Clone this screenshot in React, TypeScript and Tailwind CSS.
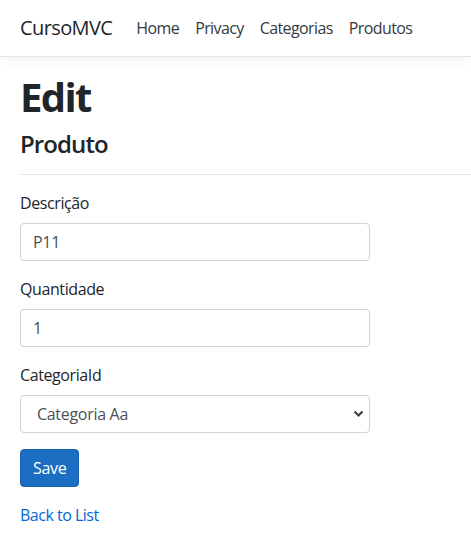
import { useState } from 'react'

const font = { fontFamily: '"Open Sans", "Noto Sans", Arial, sans-serif' }

function Navbar() {
  const links = ['Home', 'Privacy', 'Categorias', 'Produtos']
  return (
    <nav className="h-[57px] flex items-center px-5 bg-white border-b border-[#e5e5e5] shadow-[0_4px_12px_rgba(0,0,0,0.05)] mb-4">
      <a className="text-[20px] leading-[30px] text-[#212529] tracking-[-0.6px] mr-4">CursoMVC</a>
      <ul className="flex">
        {links.map((l) => (
          <li key={l}>
            <a className="block px-2 text-[16px] leading-6 text-[#343a40] tracking-[-0.6px]">{l}</a>
          </li>
        ))}
      </ul>
    </nav>
  )
}

function Field({ label, value }: { label: string; value: string }) {
  const [v, setV] = useState(value)
  return (
    <div className="mb-4">
      <label className="block mb-2 text-[16px] leading-6 text-[#212529] tracking-[-0.4px]">{label}</label>
      <input
        value={v}
        onChange={(e) => setV(e.target.value)}
        className="block w-[350px] h-[38px] px-3 text-[16px] text-[#495057] border border-[#ced4da] rounded-[4px] outline-none tracking-[-0.3px]"
      />
    </div>
  )
}

export default function App() {
  return (
    <div className="min-h-[541px] bg-white" style={font}>
      <Navbar />
      <main className="px-5 pb-4">
        <h1 className="text-[40px] leading-[48px] font-bold text-[#212529] mb-2 tracking-[-1.6px]">Edit</h1>
        <h4 className="text-[24px] leading-[29px] font-semibold text-[#212529] tracking-[-0.9px]">Produto</h4>
        <hr className="my-4 -mr-5 border-t border-[rgba(0,0,0,0.1)]" />
        <form onSubmit={(e) => e.preventDefault()}>
          <Field label="Descrição" value="P11" />
          <Field label="Quantidade" value="1" />
          <div className="mb-4">
            <label className="block mb-2 text-[16px] leading-6 text-[#212529] tracking-[-0.4px]">CategoriaId</label>
            <div className="relative w-[350px]">
              <select className="block w-full h-[38px] pl-4 pr-8 text-[16px] text-[#495057] bg-white border border-[#ced4da] rounded-[4px] appearance-none outline-none tracking-[-0.3px]">
                <option>Categoria Aa</option>
              </select>
              <svg className="absolute right-[6px] top-[15px] pointer-events-none" width="11" height="8" viewBox="0 0 11 8">
                <path d="M1.5 1.5 L5.5 5.5 L9.5 1.5" fill="none" stroke="#3a3f44" strokeWidth="2.2" />
              </svg>
            </div>
          </div>
          <div className="mb-4">
            <button type="submit" className="h-[38px] px-3 text-[16px] text-white bg-[#1b6ec2] border border-[#1861ac] rounded-[4px] tracking-[-0.3px]">
              Save
            </button>
          </div>
        </form>
        <div>
          <a className="text-[16px] leading-6 text-[#0366d6] tracking-[-0.5px]">Back to List</a>
        </div>
      </main>
    </div>
  )
}
